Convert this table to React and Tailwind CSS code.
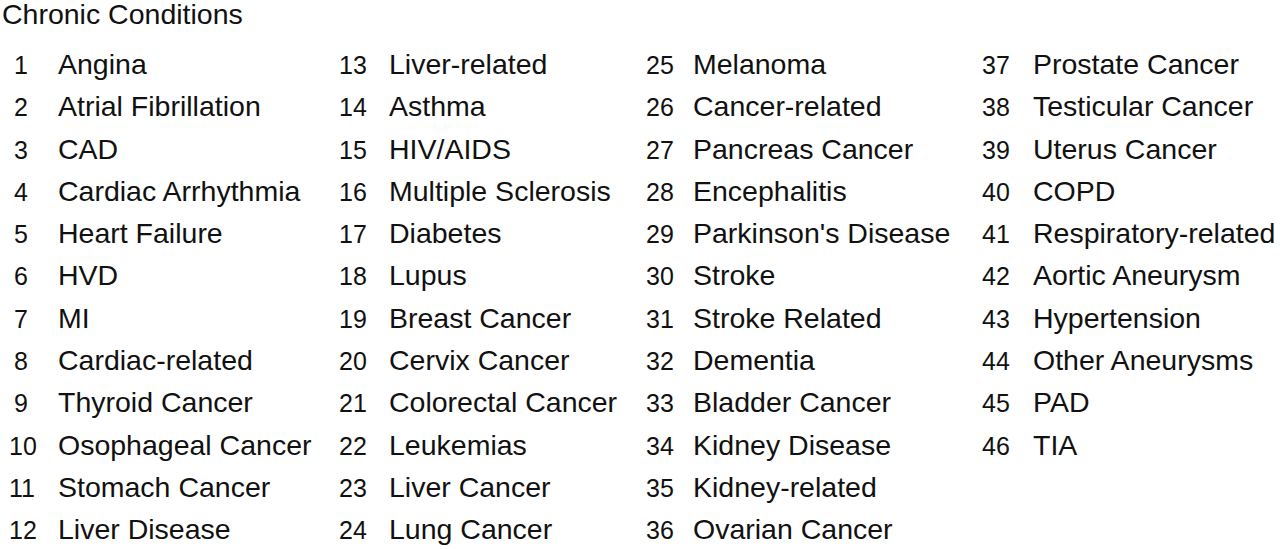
const conditions = [
  'Angina', 'Atrial Fibrillation', 'CAD', 'Cardiac Arrhythmia', 'Heart Failure', 'HVD',
  'MI', 'Cardiac-related', 'Thyroid Cancer', 'Osophageal Cancer', 'Stomach Cancer', 'Liver Disease',
  'Liver-related', 'Asthma', 'HIV/AIDS', 'Multiple Sclerosis', 'Diabetes', 'Lupus',
  'Breast Cancer', 'Cervix Cancer', 'Colorectal Cancer', 'Leukemias', 'Liver Cancer', 'Lung Cancer',
  'Melanoma', 'Cancer-related', 'Pancreas Cancer', 'Encephalitis', "Parkinson's Disease", 'Stroke',
  'Stroke Related', 'Dementia', 'Bladder Cancer', 'Kidney Disease', 'Kidney-related', 'Ovarian Cancer',
  'Prostate Cancer', 'Testicular Cancer', 'Uterus Cancer', 'COPD', 'Respiratory-related', 'Aortic Aneurysm',
  'Hypertension', 'Other Aneurysms', 'PAD', 'TIA',
];

// each column: its own width and the room given to the number
const columns = [
  { col: 'w-[330px]', num: 'w-[49px]' },
  { col: 'w-[307px]', num: 'w-[50px]' },
  { col: 'w-[336px]', num: 'w-[47px]' },
  { col: 'flex-1', num: 'w-[51px]' },
];

export default function App() {
  return (
    <div
      className="w-[1280px] h-[549px] bg-white text-[#111] overflow-hidden"
      style={{ fontFamily: '"Liberation Sans", Arial, sans-serif' }}
    >
      <h1 className="pl-[2px] -mt-[1px] text-[28.5px] leading-[30px] font-normal">Chronic Conditions</h1>

      <div className="flex pl-[9px] mt-[14px]">
        {columns.map((c, ci) => (
          <div key={ci} className={`${c.col} flex flex-col shrink-0`}>
            {conditions.slice(ci * 12, ci * 12 + 12).map((name, i) => {
              const n = ci * 12 + i + 1;
              return (
                <div key={n} className="flex items-baseline h-[42.3px] leading-[42.3px] whitespace-nowrap">
                  <div className={`${c.num} shrink-0 text-[25px]`}>
                    <span className="inline-block w-[24px] text-center">{n}</span>
                  </div>
                  <span className="text-[28.5px]">{name}</span>
                </div>
              );
            })}
          </div>
        ))}
      </div>
    </div>
  );
}
